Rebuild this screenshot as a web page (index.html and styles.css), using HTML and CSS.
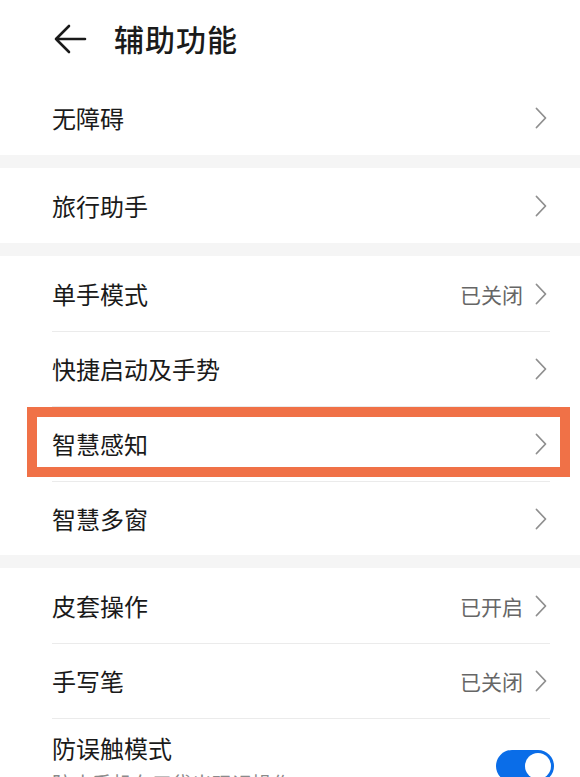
FILE: index.html
```html
<!DOCTYPE html>
<html>
<head>
    <meta charset="UTF-8">
    <title>辅助功能</title>
    <link rel="stylesheet" href="styles.css">
</head>
<body>
    <!-- Header -->
    <div class="header">
        <svg class="back" width="34" height="32" viewBox="0 0 34 32">
            <path d="M32 16 H3 M16 3 L3 16 L16 29" fill="none" stroke="#1a1a1a" stroke-width="2.6" stroke-linecap="round" stroke-linejoin="round"/>
        </svg>
        <h1>辅助功能</h1>
    </div>

    <div class="group">
        <div class="row"><div class="row-inner"><span class="label">无障碍</span><svg class="chev" viewBox="0 0 12 22"><path d="M1.5 1.5 L10.5 11 L1.5 20.5"/></svg></div></div>
    </div>
    <div class="gap"></div>

    <div class="group">
        <div class="row"><div class="row-inner"><span class="label">旅行助手</span><svg class="chev" viewBox="0 0 12 22"><path d="M1.5 1.5 L10.5 11 L1.5 20.5"/></svg></div></div>
    </div>
    <div class="gap"></div>

    <div class="group">
        <div class="row"><div class="row-inner"><span class="label">单手模式</span><span class="value">已关闭</span><svg class="chev" viewBox="0 0 12 22"><path d="M1.5 1.5 L10.5 11 L1.5 20.5"/></svg></div></div>
        <div class="row"><div class="row-inner"><span class="label">快捷启动及手势</span><svg class="chev" viewBox="0 0 12 22"><path d="M1.5 1.5 L10.5 11 L1.5 20.5"/></svg></div></div>
        <div class="row marked"><div class="row-inner"><span class="label">智慧感知</span><svg class="chev" viewBox="0 0 12 22"><path d="M1.5 1.5 L10.5 11 L1.5 20.5"/></svg></div></div>
        <div class="row last"><div class="row-inner"><span class="label">智慧多窗</span><svg class="chev" viewBox="0 0 12 22"><path d="M1.5 1.5 L10.5 11 L1.5 20.5"/></svg></div></div>
    </div>
    <div class="gap"></div>

    <div class="group">
        <div class="row"><div class="row-inner"><span class="label">皮套操作</span><span class="value">已开启</span><svg class="chev" viewBox="0 0 12 22"><path d="M1.5 1.5 L10.5 11 L1.5 20.5"/></svg></div></div>
        <div class="row"><div class="row-inner"><span class="label">手写笔</span><span class="value">已关闭</span><svg class="chev" viewBox="0 0 12 22"><path d="M1.5 1.5 L10.5 11 L1.5 20.5"/></svg></div></div>
        <div class="row tall">
            <div class="row-inner">
                <div class="text">
                    <span class="label">防误触模式</span>
                    <span class="sub">防止手机在口袋出现误操作</span>
                </div>
                <div class="switch on"></div>
            </div>
        </div>
    </div>
</body>
</html>
```

FILE: styles.css
```css
body {
    margin: 0;
    padding: 0;
    background-color: #fff;
    color: #1a1a1a;
    font-family: "Noto Sans CJK SC", "Noto Sans", sans-serif;
    width: 580px;
    height: 777px;
    overflow: hidden;
}

.header {
    display: flex;
    align-items: center;
    height: 80px;
    padding-left: 53px;
    box-sizing: border-box;
}
.header .back {
    margin-top: -2px;
}
.header h1 {
    margin: 0 0 4px 27px;
    font-size: 30px;
    font-weight: 500;
    letter-spacing: 1px;
}

.gap {
    height: 13px;
    background-color: #f5f5f5;
}

.row {
    padding: 0 30px 0 52px;
    position: relative;
}
.row-inner {
    display: flex;
    align-items: center;
    height: 75px;
    box-sizing: border-box;
    padding-right: 2px;
}
.row + .row .row-inner {
    border-top: 1px solid #ebebeb;
}
.row.last .row-inner {
    height: 74px;
}

.label {
    flex: 1;
    font-size: 24px;
    line-height: 30px;
}
.value {
    font-size: 21px;
    color: #666;
    margin-right: 12px;
}
.chev {
    width: 12px;
    height: 22px;
    margin-right: 1px;
}
.chev path {
    fill: none;
    stroke: #8f8f8f;
    stroke-width: 1.8;
    stroke-linecap: round;
    stroke-linejoin: round;
}

/* annotation box */
.row.marked::after {
    content: "";
    position: absolute;
    left: 27px;
    right: 10px;
    top: 1px;
    bottom: 4px;
    border: 10px solid #f07147;
}

.row.tall .row-inner {
    height: 80px;
    align-items: flex-start;
    padding-top: 14px;
    padding-right: 0;
}
.text {
    flex: 1;
    display: flex;
    flex-direction: column;
}
.sub {
    font-size: 20px;
    color: #8a8a8a;
    margin-top: 6px;
}

.switch {
    width: 58px;
    height: 32px;
    border-radius: 16px;
    background-color: #0a6de8;
    position: relative;
    margin-top: 17px;
    margin-right: -4px;
}
.switch::after {
    content: "";
    position: absolute;
    top: 3px;
    right: 3px;
    width: 26px;
    height: 26px;
    border-radius: 50%;
    background-color: #fff;
}
```
